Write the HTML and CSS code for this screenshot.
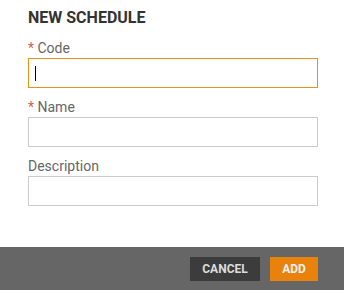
FILE: index.html
```html
<!DOCTYPE html>
<html>
<head>
<meta charset="utf-8">
<link rel="stylesheet" href="styles.css">
</head>
<body>
<div class="dialog">
  <div class="content">
    <h1 class="title">NEW SCHEDULE</h1>
    <div class="field">
      <label class="label"><span class="req">*</span> Code</label>
      <div class="input focused"><span class="caret"></span></div>
    </div>
    <div class="field">
      <label class="label"><span class="req">*</span> Name</label>
      <div class="input"></div>
    </div>
    <div class="field">
      <label class="label">Description</label>
      <div class="input"></div>
    </div>
  </div>
  <div class="footer">
    <button class="btn cancel">CANCEL</button>
    <button class="btn add">ADD</button>
  </div>
</div>
</body>
</html>
```

FILE: styles.css
```css
html, body {
  margin: 0;
  padding: 0;
  background: #fff;
}
body {
  font-family: Roboto, "Liberation Sans", sans-serif;
  width: 344px;
  height: 290px;
  overflow: hidden;
}
.dialog {
  display: flex;
  flex-direction: column;
  height: 290px;
}
.content {
  flex: 1;
  padding: 8px 26px 0 28px;
}
.title {
  margin: 0 0 12px 0;
  font-size: 16px;
  font-weight: 700;
  color: #333;
  line-height: 20px;
}
.field {
  display: flex;
  flex-direction: column;
  margin-bottom: 11px;
}
.label {
  font-size: 14px;
  color: #666;
  line-height: 17px;
  margin-bottom: 1px;
}
.req {
  color: #e05a4f;
}
.input {
  box-sizing: border-box;
  height: 30px;
  border: 1px solid #cccccc;
  position: relative;
}
.input.focused {
  border-color: #e8901a;
}
.caret {
  position: absolute;
  left: 6px;
  top: 7px;
  width: 1px;
  height: 15px;
  background: #000;
}
.footer {
  height: 43px;
  background: #666666;
  display: flex;
  justify-content: flex-end;
  align-items: center;
  gap: 10px;
  padding-right: 26px;
}
.btn {
  border: none;
  height: 24px;
  font-family: Roboto, "Liberation Sans", sans-serif;
  font-size: 12px;
  font-weight: 700;
  color: #dddddd;
  padding: 0;
}
.cancel {
  width: 70px;
  background: #3c3c3c;
}
.add {
  width: 48px;
  background: #e8820c;
  color: #f3f3f3;
}
```
